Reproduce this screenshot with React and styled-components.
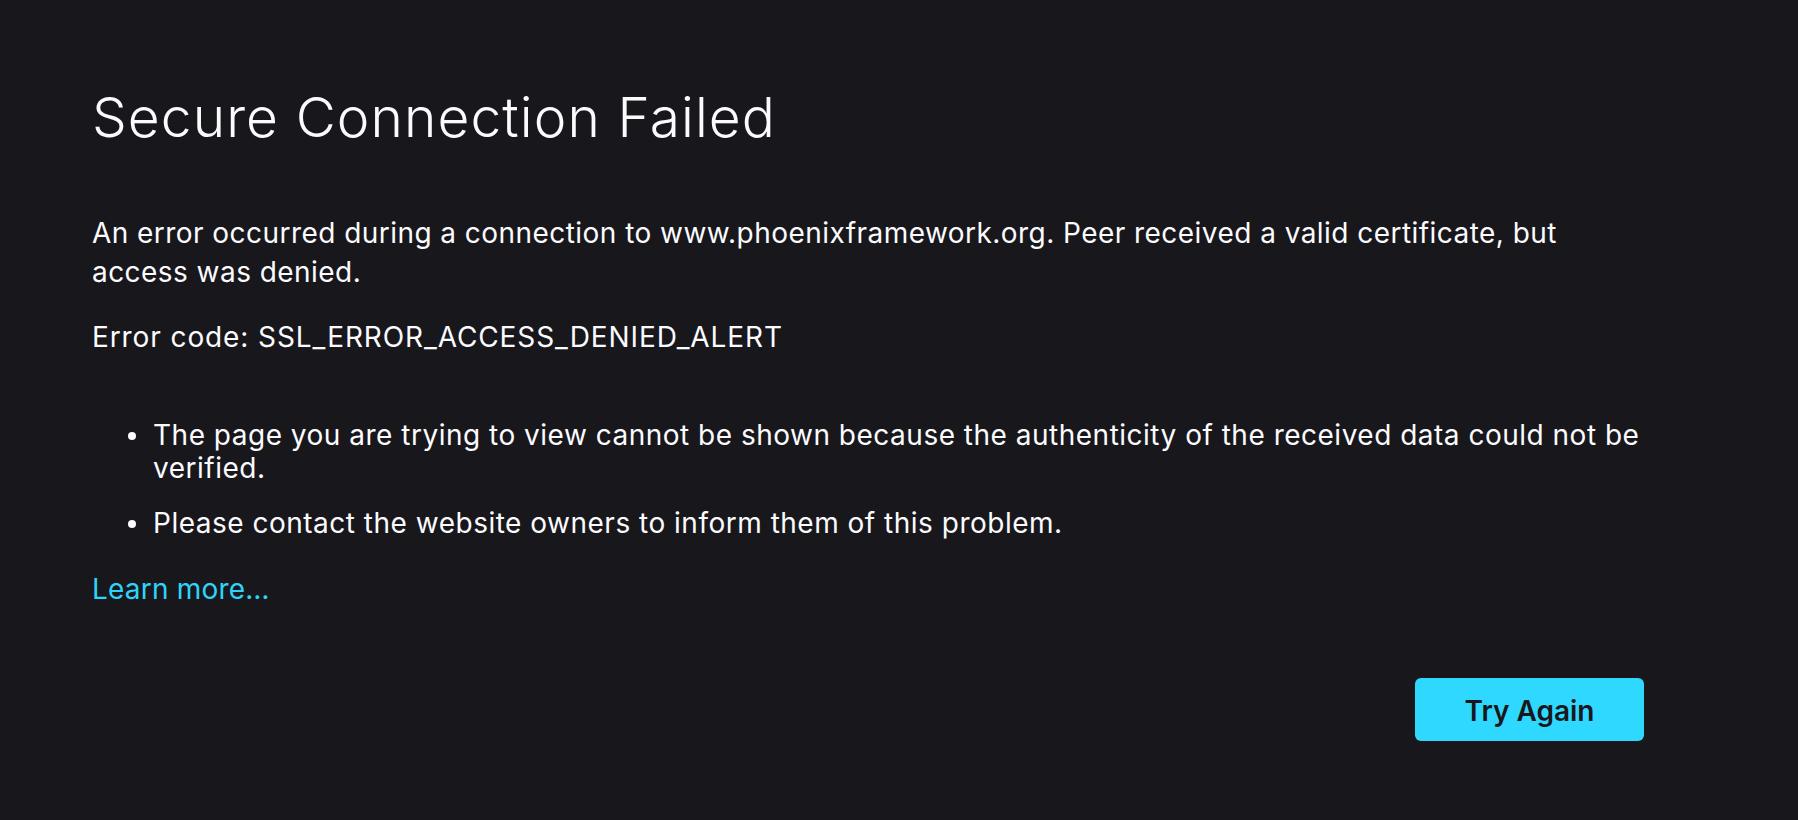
import React from 'react'
import styled, { createGlobalStyle } from 'styled-components'

const GlobalStyle = createGlobalStyle`
  html, body {
    margin: 0;
    padding: 0;
    background: #18171c;
  }
  body {
    font-family: Inter, Roboto, 'Liberation Sans', sans-serif;
    color: #fbfbfe;
  }
`

const Page = styled.div`
  min-height: 820px;
  box-sizing: border-box;
  padding: 84px 0 0 92px;
`

const Container = styled.div`
  width: 1552px;
`

const Title = styled.h1`
  margin: 0;
  font-size: 55px;
  line-height: 66px;
  font-weight: 300;
  letter-spacing: 1.1px;
`

const Text = styled.p`
  margin: ${(p) => p.$top || 0}px 0 0;
  font-size: 28px;
  line-height: 39px;
  letter-spacing: ${(p) => p.$spacing || 0.45}px;
`

const List = styled.ul`
  margin: 62px 0 0;
  padding: 0 0 0 61px;
  list-style: none;
`

const Item = styled.li`
  position: relative;
  font-size: 28px;
  line-height: 33px;
  letter-spacing: 0.5px;
  & + & {
    margin-top: 22px;
  }
  &::before {
    content: '';
    position: absolute;
    left: -25px;
    top: 13px;
    width: 8px;
    height: 8px;
    border-radius: 50%;
    background: #fbfbfe;
  }
`

const LearnMore = styled.a`
  display: inline-block;
  margin-top: 30px;
  font-size: 28px;
  line-height: 39px;
  letter-spacing: 0.2px;
  color: #2fd3fa;
  text-decoration: none;
`

const Actions = styled.div`
  display: flex;
  justify-content: flex-end;
  margin-top: 69px;
`

const Button = styled.button`
  width: 229px;
  height: 63px;
  padding: 3px 0 0;
  border: none;
  border-radius: 6px;
  background: #2fd8ff;
  color: #18171c;
  font-family: Inter, Roboto, 'Liberation Sans', sans-serif;
  font-size: 28px;
  font-weight: 600;
  cursor: pointer;
`

export default function App() {
  return (
    <Page>
      <GlobalStyle />
      <Container>
        <Title>Secure Connection Failed</Title>
        <Text $top={64}>
          An error occurred during a connection to www.phoenixframework.org. Peer received a valid certificate, but
          <br />
          access was denied.
        </Text>
        <Text $top={26} $spacing={0.9}>Error code: SSL_ERROR_ACCESS_DENIED_ALERT</Text>
        <List>
          <Item>
            The page you are trying to view cannot be shown because the authenticity of the received data could not be
            <br />
            verified.
          </Item>
          <Item>Please contact the website owners to inform them of this problem.</Item>
        </List>
        <LearnMore href="#">Learn more…</LearnMore>
        <Actions>
          <Button>Try Again</Button>
        </Actions>
      </Container>
    </Page>
  )
}
